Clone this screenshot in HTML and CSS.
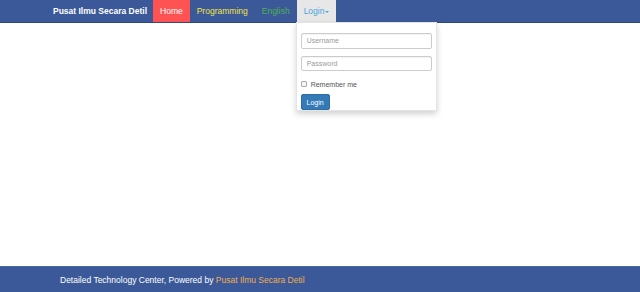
FILE: index.html
```html
<!DOCTYPE html>
<html>
<head>
<meta charset="utf-8">
<link rel="stylesheet" href="styles.css">
</head>
<body>
<nav class="navbar">
  <a class="brand" href="#">Pusat Ilmu Secara Detil</a>
  <ul class="nav">
    <li><a class="nav-link home" href="#">Home</a></li>
    <li><a class="nav-link prog" href="#">Programming</a></li>
    <li><a class="nav-link eng" href="#">English</a></li>
    <li class="dropdown">
      <a class="nav-link login" href="#">Login<span class="caret"></span></a>
      <div class="dropdown-menu">
        <input class="field" type="text" placeholder="Username">
        <input class="field" type="password" placeholder="Password">
        <label class="remember"><span class="box"></span>Remember me</label>
        <button class="btn">Login</button>
      </div>
    </li>
  </ul>
</nav>
<main class="content"></main>
<footer class="footer">
  <p>Detailed Technology Center, Powered by <a href="#">Pusat Ilmu Secara Detil</a></p>
</footer>
</body>
</html>
```
FILE: styles.css
```css
* { box-sizing: border-box; }
html, body { margin: 0; padding: 0; }
body {
  width: 640px;
  height: 292px;
  display: flex;
  flex-direction: column;
  font-family: "Liberation Sans", Arial, sans-serif;
  font-size: 8.5px;
  background: #fff;
  overflow: hidden;
}
a { text-decoration: none; }
.navbar {
  height: 23px;
  background: #3b5998;
  border-bottom: 1px solid #2d4a85;
  display: flex;
  align-items: stretch;
  padding-left: 53px;
  flex: none;
}
.brand {
  color: #fff;
  font-weight: bold;
  line-height: 22px;
  margin-right: 6px;
}
.nav {
  list-style: none;
  margin: 0;
  padding: 0;
  display: flex;
}
.nav li { position: relative; }
.nav-link {
  display: block;
  line-height: 22px;
  padding: 0 7px;
}
.home { background: #ff5252; color: #fff; }
.prog { color: #f5e43c; }
.eng { color: #4cb050; }
.login { background: #e7e7e7; color: #4aa3df; height: 22px; }
.caret {
  display: inline-block;
  width: 0;
  height: 0;
  margin-left: 1px;
  vertical-align: middle;
  border-top: 2px solid #4aa3df;
  border-left: 2px solid transparent;
  border-right: 2px solid transparent;
}
.dropdown-menu {
  position: absolute;
  left: -1px;
  top: 22px;
  width: 141px;
  height: 89px;
  background: #fff;
  border: 1px solid #e4e4e4;
  box-shadow: 0 3px 6px rgba(0,0,0,0.18);
  padding: 10px 4px 0 4px;
  display: flex;
  flex-direction: column;
  z-index: 10;
}
.field {
  width: 131px;
  height: 16px;
  border: 1px solid #ccc;
  border-radius: 2px;
  font-family: inherit;
  font-size: 7px;
  padding: 0 5px;
  margin: 0 0 7px 0;
  color: #555;
  box-shadow: inset 0 1px 1px rgba(0,0,0,0.05);
}
.field::placeholder { color: #999; }
.remember {
  display: flex;
  align-items: center;
  font-size: 7px;
  color: #555;
  margin: 1px 0 5px 0;
  height: 10px;
}
.box {
  width: 6px;
  height: 6px;
  border: 1px solid #aaa;
  border-radius: 1px;
  background: #f5f5f5;
  margin-right: 4px;
}
.btn {
  width: 29px;
  height: 16px;
  background: #337ab7;
  border: 1px solid #2e6da4;
  border-radius: 2px;
  color: #fff;
  font-family: inherit;
  font-size: 7px;
  padding: 0;
}
.content { flex: 1; }
.footer {
  height: 26px;
  flex: none;
  background: #3b5998;
  border-top: 1px solid #4a68a5;
  padding-left: 60px;
  display: flex;
  align-items: center;
}
.footer p {
  margin: 0;
  color: #fff;
  font-size: 8.5px;
}
.footer a { color: #f0ad4e; }
```
